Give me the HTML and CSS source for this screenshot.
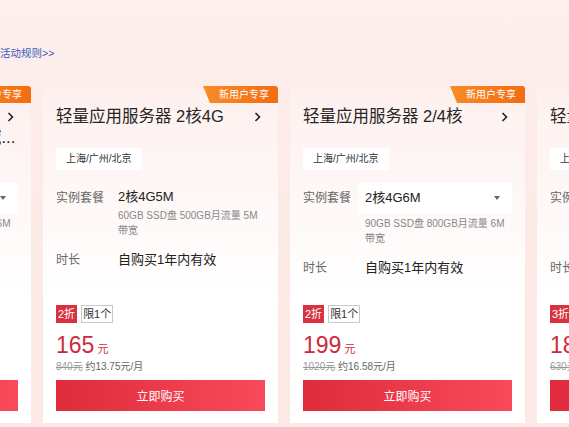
FILE: index.html
```html
<!DOCTYPE html>
<html lang="zh-CN">
<head>
<meta charset="utf-8">
<title>轻量应用服务器</title>
<link rel="stylesheet" href="styles.css">
</head>
<body>
<div class="rules"><a href="#">活动规则&gt;&gt;</a></div>
<div class="carousel">
  <div class="track">
    <div class="card">
      <span class="badge">新用户专享</span>
      <h3 class="title"><svg class="chev" viewBox="0 0 7 10"><path d="M1.5 1 L5.5 5 L1.5 9"/></svg>轻量应用服务器 2核2G Linux系统 香港新加坡地域...</h3>
      <div class="region">上海/广州/北京</div>
      <div class="spec spec-plan">
        <span class="spec-label">实例套餐</span>
        <div class="spec-body">
          <div class="select">2核2G6M<i class="caret"></i></div>
          <p class="desc">40GB SSD盘 600GB月流量 6M 带宽</p>
        </div>
      </div>
      <div class="spec spec-time">
        <span class="spec-label">时长</span>
        <div class="value">自购买1年内有效</div>
      </div>
      <div class="buy">
        <div class="tags"><span class="tag tag-off">2折</span><span class="tag tag-limit">限1个</span></div>
        <div class="price"><span class="price-num">99</span><span class="price-unit">元</span></div>
        <div class="was"><s>500元</s> 约8.25元/月</div>
        <button class="btn">立即购买</button>
      </div>
    </div>

    <div class="card">
      <span class="badge">新用户专享</span>
      <h3 class="title"><svg class="chev" viewBox="0 0 7 10"><path d="M1.5 1 L5.5 5 L1.5 9"/></svg>轻量应用服务器 2核4G</h3>
      <div class="region">上海/广州/北京</div>
      <div class="spec spec-plan">
        <span class="spec-label">实例套餐</span>
        <div class="spec-body">
          <div class="select static">2核4G5M</div>
          <p class="desc">60GB SSD盘 500GB月流量 5M 带宽</p>
        </div>
      </div>
      <div class="spec spec-time">
        <span class="spec-label">时长</span>
        <div class="value">自购买1年内有效</div>
      </div>
      <div class="buy">
        <div class="tags"><span class="tag tag-off">2折</span><span class="tag tag-limit">限1个</span></div>
        <div class="price"><span class="price-num">165</span><span class="price-unit">元</span></div>
        <div class="was"><s>840元</s> 约13.75元/月</div>
        <button class="btn">立即购买</button>
      </div>
    </div>

    <div class="card">
      <span class="badge">新用户专享</span>
      <h3 class="title"><svg class="chev" viewBox="0 0 7 10"><path d="M1.5 1 L5.5 5 L1.5 9"/></svg>轻量应用服务器 2/4核</h3>
      <div class="region">上海/广州/北京</div>
      <div class="spec spec-plan">
        <span class="spec-label">实例套餐</span>
        <div class="spec-body">
          <div class="select">2核4G6M<i class="caret"></i></div>
          <p class="desc">90GB SSD盘 800GB月流量 6M 带宽</p>
        </div>
      </div>
      <div class="spec spec-time">
        <span class="spec-label">时长</span>
        <div class="value">自购买1年内有效</div>
      </div>
      <div class="buy">
        <div class="tags"><span class="tag tag-off">2折</span><span class="tag tag-limit">限1个</span></div>
        <div class="price"><span class="price-num">199</span><span class="price-unit">元</span></div>
        <div class="was"><s>1020元</s> 约16.58元/月</div>
        <button class="btn">立即购买</button>
      </div>
    </div>

    <div class="card">
      <span class="badge">新用户专享</span>
      <h3 class="title"><svg class="chev" viewBox="0 0 7 10"><path d="M1.5 1 L5.5 5 L1.5 9"/></svg>轻量应用服务器 4核8G</h3>
      <div class="region">上海/广州/北京</div>
      <div class="spec spec-plan">
        <span class="spec-label">实例套餐</span>
        <div class="spec-body">
          <div class="select">4核8G10M<i class="caret"></i></div>
          <p class="desc">120GB SSD盘 1200GB月流量 10M 带宽</p>
        </div>
      </div>
      <div class="spec spec-time">
        <span class="spec-label">时长</span>
        <div class="value">自购买1年内有效</div>
      </div>
      <div class="buy">
        <div class="tags"><span class="tag tag-off">3折</span><span class="tag tag-limit">限1个</span></div>
        <div class="price"><span class="price-num">189</span><span class="price-unit">元</span></div>
        <div class="was"><s>630元</s> 约15.75元/月</div>
        <button class="btn">立即购买</button>
      </div>
    </div>
  </div>
</div>
</body>
</html>
```

FILE: styles.css
```css
* {
  box-sizing: border-box;
  margin: 0;
  padding: 0;
}

html,
body {
  width: 569px;
  height: 427px;
  overflow: hidden;
}

body {
  font-family: "Liberation Sans", "Noto Sans CJK SC", sans-serif;
  color: #222;
  background: linear-gradient(180deg, #fdf0ef 0%, #fcebe8 35%, #fce8e5 100%);
}

.rules {
  height: 60px;
  padding-top: 46px;
  font-size: 10.5px;
  line-height: 14px;
}

.rules a {
  color: #3a57b9;
  text-decoration: none;
}

.carousel {
  padding-top: 29px;
}

.track {
  display: flex;
  gap: 12px;
  margin-left: -204px;
}

.card {
  position: relative;
  flex: 0 0 235px;
  height: 334px;
  padding: 17px 13px 12px;
  display: flex;
  flex-direction: column;
  background: linear-gradient(180deg, #fdf1ef 0%, #fef8f7 35%, #ffffff 62%);
}

.badge {
  position: absolute;
  top: -3px;
  right: 0;
  width: 75px;
  height: 17px;
  padding-right: 9px;
  font-size: 10px;
  line-height: 17px;
  text-align: right;
  color: #fff;
  background: linear-gradient(90deg, #f98b27 0%, #f36c12 100%);
  border-top-right-radius: 3px;
  clip-path: polygon(0 0, 100% 0, 100% 100%, 7px 100%);
}

.title {
  height: 42px;
  overflow: hidden;
  font-size: 16.5px;
  line-height: 21px;
  font-weight: 400;
  color: #262626;
}

.chev {
  float: right;
  width: 7px;
  height: 10px;
  margin: 5.5px 4px 0 6px;
}

.chev path {
  fill: none;
  stroke: #222;
  stroke-width: 1.6;
}

.region {
  align-self: flex-start;
  height: 22px;
  padding: 0 10px;
  font-size: 10px;
  line-height: 22px;
  color: #333;
  background: #fff;
}

.spec {
  display: grid;
  grid-template-columns: 55px 1fr;
}

.spec-plan {
  margin-top: 13px;
}

.spec-label {
  font-size: 12px;
  line-height: 30px;
  color: #666;
  white-space: nowrap;
}

.select {
  position: relative;
  height: 30px;
  padding: 0 7px;
  font-size: 13px;
  line-height: 30px;
  color: #222;
  background: #fff;
}

.select.static {
  height: 25px;
  padding-top: 2px;
  line-height: 23px;
  background: none;
}

.caret {
  position: absolute;
  top: 13px;
  right: 12px;
  border-left: 3px solid transparent;
  border-right: 3px solid transparent;
  border-top: 4px solid #666;
}

.desc {
  margin-top: 3px;
  padding: 0 7px;
  font-size: 10px;
  line-height: 15px;
  color: #888;
}

.static + .desc {
  margin-top: 0;
}

.spec-time {
  margin-top: 10px;
}

.spec-time .spec-label {
  line-height: 24px;
}

.value {
  padding-left: 7px;
  font-size: 13px;
  line-height: 24px;
  color: #222;
}

.buy {
  margin-top: auto;
}

.tags {
  display: flex;
  gap: 4px;
}

.tag {
  height: 18px;
  padding: 0 1px;
  border: 1px solid;
  font-size: 11px;
  line-height: 16px;
}

.tag-off {
  color: #fff;
  background: #d8313f;
  border-color: #d8313f;
}

.tag-limit {
  color: #333;
  background: #fff;
  border-color: #c9c9c9;
}

.price {
  margin-top: 9px;
  height: 26px;
  line-height: 26px;
  color: #cc2b3e;
}

.price-num {
  font-size: 23px;
}

.price-unit {
  margin-left: 3px;
  font-size: 11px;
}

.was {
  margin-top: 2px;
  font-size: 10px;
  line-height: 14px;
  color: #666;
  white-space: nowrap;
}

.was s {
  color: #999;
}

.btn {
  display: block;
  width: 100%;
  height: 31px;
  margin-top: 6px;
  border: 0;
  font-family: "Liberation Sans", "Noto Sans CJK SC", sans-serif;
  font-size: 12px;
  color: #fff;
  background: linear-gradient(90deg, #df2b3b 0%, #f84a5b 100%);
}
```
